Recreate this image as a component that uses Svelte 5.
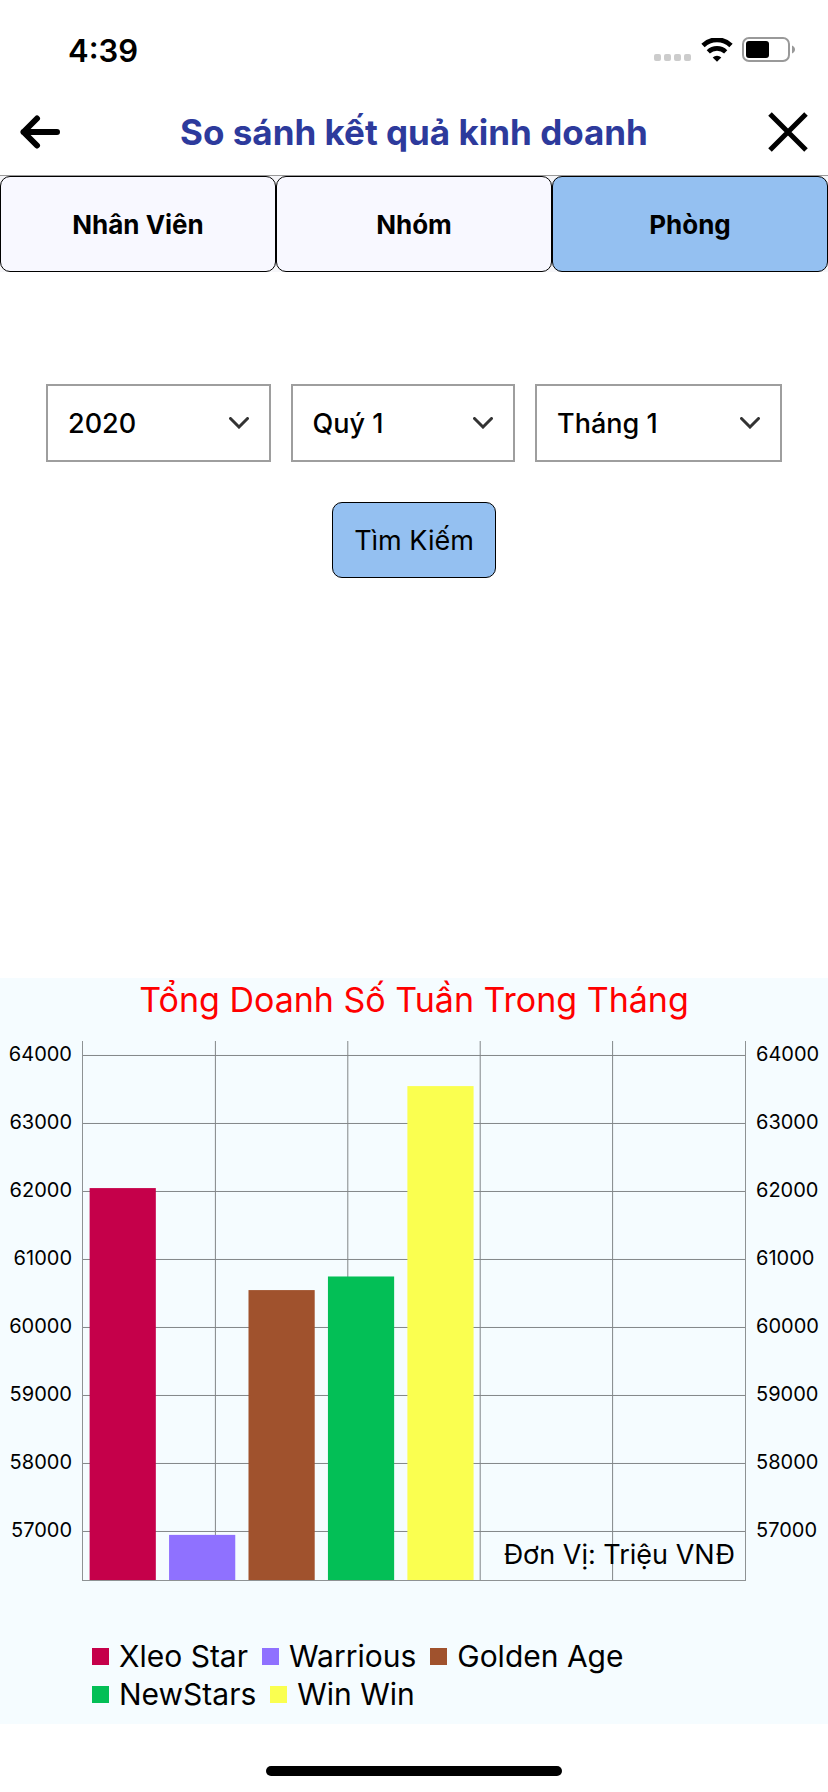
<script>
  const tabs = ['Nhân Viên', 'Nhóm', 'Phòng'];
  let activeTab = $state('Phòng');

  const filters = [
    { id: 'year', label: 'Năm', options: ['2020'] },
    { id: 'quarter', label: 'Quý', options: ['Quý 1'] },
    { id: 'month', label: 'Tháng', options: ['Tháng 1'] }
  ];

  const teams = [
    { name: 'Xleo Star', value: 62050, color: '#c5004a' },
    { name: 'Warrious', value: 56950, color: '#8f71ff' },
    { name: 'Golden Age', value: 60550, color: '#a0522d' },
    { name: 'NewStars', value: 60750, color: '#03bf56' },
    { name: 'Win Win', value: 63550, color: '#faff50' }
  ];

  const ticks = [64000, 63000, 62000, 61000, 60000, 59000, 58000, 57000];
  const columns = [20, 40, 60, 80];
  const maxValue = 64213;
  const plotHeight = 539;
  const tickStep = 68;

  const y = (value) => ((maxValue - value) / 1000) * tickStep;
</script>

<div class="page">
  <div class="status">
    <span class="time">4:39</span>
    <div class="indicators">
      <svg width="38" height="24" viewBox="0 0 38 24" fill="#cccccc" aria-hidden="true">
        <rect x="0" y="16" width="7" height="7" rx="2" />
        <rect x="10" y="16" width="7" height="7" rx="2" />
        <rect x="20" y="16" width="7" height="7" rx="2" />
        <rect x="30" y="16" width="7" height="7" rx="2" />
      </svg>
      <svg width="32" height="24" viewBox="0 0 32 24" aria-hidden="true">
        <path d="M2 7.4a20.2 20.2 0 0 1 28 0" fill="none" stroke="#000" stroke-width="4.8" />
        <path d="M7.3 13.9a12.6 12.6 0 0 1 17.4 0" fill="none" stroke="#000" stroke-width="4.6" />
        <path d="M16 23.8l-4.300-4.3a6.200 6.200 0 0 1 8.600 0z" />
      </svg>
      <svg width="54" height="26" viewBox="0 0 54 26" aria-hidden="true">
        <rect x="1" y="1" width="46" height="23" rx="6" fill="none" stroke="#999" stroke-width="2" />
        <rect x="4" y="4" width="23" height="17" rx="3" />
        <path d="M50 8.5c4 1.5 4 6.500 0 8z" fill="#999" />
      </svg>
    </div>
  </div>

  <header>
    <button class="icon" aria-label="Quay lại">
      <svg width="40" height="34" viewBox="0 0 40 34" fill="none" stroke="#000" stroke-width="6" stroke-linecap="round" stroke-linejoin="round">
        <path d="M17 3.500L3.500 17L17 30.500M3.500 17H37" />
      </svg>
    </button>
    <h1>So sánh kết quả kinh doanh</h1>
    <button class="icon" aria-label="Đóng">
      <svg width="40" height="40" viewBox="0 0 40 40" fill="none" stroke="#000" stroke-width="5">
        <path d="M2 2L38 38M38 2L2 38" />
      </svg>
    </button>
  </header>

  <nav>
    {#each tabs as tab}
      <button class="tab" class:active={tab === activeTab} onclick={() => (activeTab = tab)}>{tab}</button>
    {/each}
  </nav>

  <form onsubmit={(event) => event.preventDefault()}>
    <div class="filters">
      {#each filters as filter}
        <div class="field">
          <select id={filter.id} aria-label={filter.label}>
            {#each filter.options as option}
              <option>{option}</option>
            {/each}
          </select>
          <svg class="chevron" width="20" height="12" viewBox="0 0 20 12" fill="none" stroke="#333" stroke-width="3" stroke-linecap="round" aria-hidden="true">
            <path d="M1.500 1.500L10 10L18.500 1.500" />
          </svg>
        </div>
      {/each}
    </div>
    <button class="search">Tìm Kiếm</button>
  </form>

  <section>
    <h2>Tổng Doanh Số Tuần Trong Tháng</h2>
    <div class="chart">
      <ul class="axis left">
        {#each ticks as tick}<li>{tick}</li>{/each}
      </ul>
      <div class="plot">
        <svg width="100%" height={plotHeight} aria-hidden="true">
          <g stroke="#828688" stroke-width="1">
            {#each ticks as tick}
              <line x1="0" x2="100%" y1={y(tick)} y2={y(tick)} />
            {/each}
            {#each columns as column}
              <line x1="{column}%" x2="{column}%" y1="0" y2={plotHeight} />
            {/each}
          </g>
          {#each teams as team, i}
            <rect x="{1 + i * 12}%" width="10%" y={y(team.value)} height={plotHeight - y(team.value)} fill={team.color} />
          {/each}
        </svg>
        <span class="unit">Đơn Vị: Triệu VNĐ</span>
      </div>
      <ul class="axis right">
        {#each ticks as tick}<li>{tick}</li>{/each}
      </ul>
    </div>
    <ul class="legend">
      {#each teams as team}
        <li><i style="background: {team.color}"></i>{team.name}</li>
      {/each}
    </ul>
  </section>

  <footer><div class="home"></div></footer>
</div>

<style>
  :global(body) {
    margin: 0;
    background: #fff;
  }
  .page {
    display: flex;
    flex-direction: column;
    min-height: 100vh;
    color: #000;
    font-family: Inter, 'Noto Sans', sans-serif;
  }
  button,
  select {
    margin: 0;
    font-family: inherit;
    color: inherit;
    cursor: pointer;
  }
  svg {
    display: block;
  }
  ul {
    margin: 0;
    padding: 0;
    list-style: none;
  }
  .status {
    display: flex;
    justify-content: space-between;
    align-items: center;
    box-sizing: border-box;
    height: 88px;
    padding: 12px 32px 0 68px;
  }
  .time {
    font-size: 31px;
    font-weight: 600;
  }
  .indicators {
    display: flex;
    align-items: center;
    gap: 9px;
  }
  header {
    display: flex;
    align-items: center;
    justify-content: space-between;
    box-sizing: border-box;
    height: 88px;
    padding: 0 20px;
    border-bottom: 1px solid #999;
  }
  .icon {
    display: flex;
    padding: 0;
    border: 0;
    background: none;
  }
  h1 {
    margin: 0;
    font-size: 35px;
    font-weight: 700;
    color: #2d3a9c;
  }
  nav {
    display: grid;
    grid-template-columns: repeat(3, 1fr);
    background: #f6f6f9;
  }
  .tab {
    height: 96px;
    padding: 0;
    border: 1px solid #000;
    border-radius: 10px;
    background: #f8f8ff;
    font-size: 26px;
    font-weight: 700;
  }
  .active,
  .search {
    background: #94c0f1;
  }
  form {
    display: flex;
    flex-direction: column;
    align-items: center;
    gap: 40px;
    padding: 112px 46px 40px;
  }
  .filters {
    display: grid;
    grid-template-columns: 1fr 1fr 1.1fr;
    gap: 20px;
    width: 100%;
  }
  .field {
    position: relative;
  }
  select {
    appearance: none;
    box-sizing: border-box;
    width: 100%;
    height: 78px;
    padding: 0 50px 0 20px;
    border: 2px solid #9e9e9e;
    border-radius: 0;
    background: #fff;
    font-size: 27px;
    font-weight: 500;
  }
  .chevron {
    position: absolute;
    top: 33px;
    right: 22px;
    pointer-events: none;
  }
  .search {
    height: 76px;
    padding: 0 21px;
    border: 1px solid #000;
    border-radius: 10px;
    font-size: 27px;
  }
  section {
    margin-top: auto;
    padding-bottom: 11px;
    background: #f5fcff;
  }
  h2 {
    margin: 0 0 19px;
    font-size: 34px;
    font-weight: 400;
    line-height: 44px;
    text-align: center;
    color: #f00;
  }
  .chart {
    display: grid;
    grid-template-columns: 82px 1fr 82px;
  }
  .axis {
    margin-top: -21px;
    font-size: 20px;
    line-height: 68px;
  }
  .left {
    padding-right: 10px;
    text-align: right;
  }
  .right {
    padding-left: 10px;
  }
  .axis li:last-child {
    height: 48px;
  }
  .plot {
    position: relative;
    align-self: start;
    border: 1px solid #8e9294;
    border-top: 0;
  }
  .unit {
    position: absolute;
    right: 10px;
    bottom: 8px;
    font-size: 27px;
    line-height: 34px;
  }
  .legend {
    display: flex;
    flex-wrap: wrap;
    gap: 0 14px;
    max-width: 560px;
    margin-top: 56px;
    padding: 0 92px;
    font-size: 30px;
    line-height: 38px;
  }
  .legend li {
    display: flex;
    align-items: center;
    gap: 10px;
  }
  .legend i {
    width: 17px;
    height: 17px;
  }
  footer {
    display: flex;
    justify-content: center;
    padding: 42px 0 16px;
  }
  .home {
    width: 296px;
    height: 10px;
    border-radius: 5px;
    background: #000;
  }
</style>
